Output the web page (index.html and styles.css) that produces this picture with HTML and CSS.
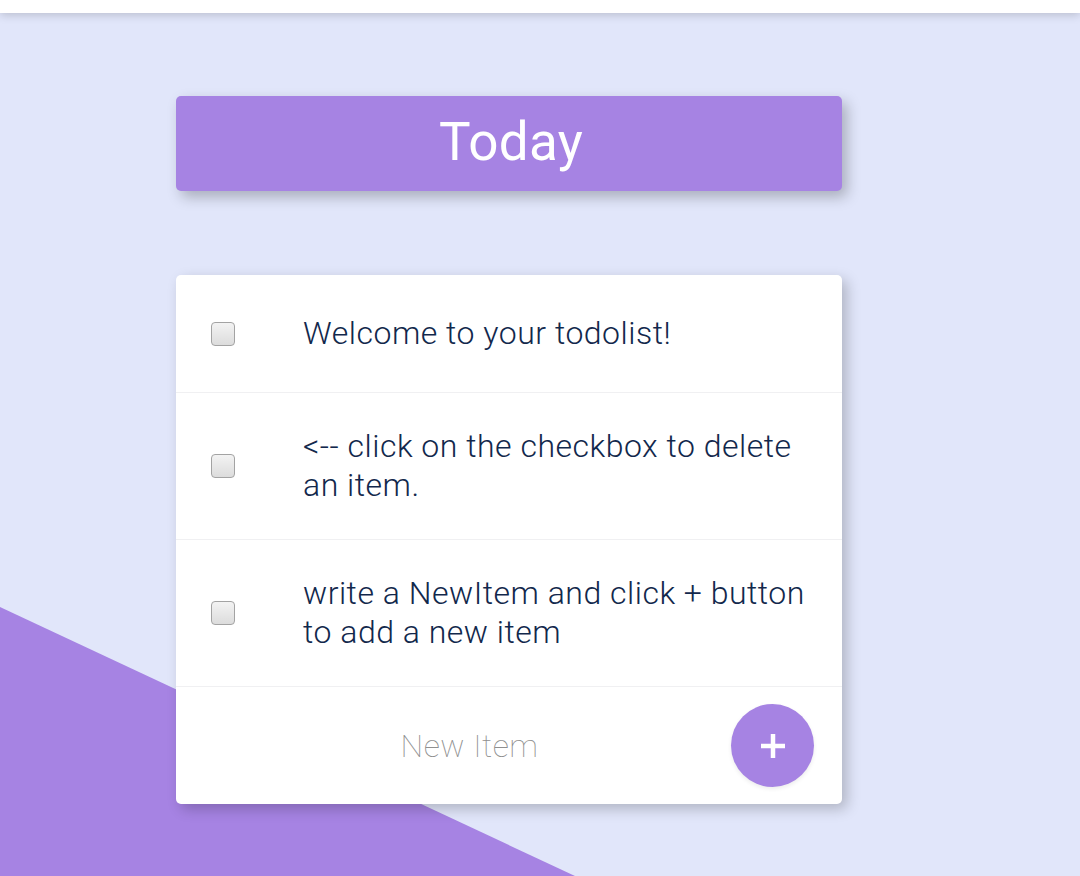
FILE: index.html
```html
<!DOCTYPE html>
<html lang="en">
<head>
<meta charset="utf-8">
<title>Todo List</title>
<link rel="stylesheet" href="styles.css">
</head>
<body>
<div class="topbar"></div>
<div class="bg-shape"></div>
<main class="page">
  <div class="heading"><h1>Today</h1></div>
  <div class="card">
    <div class="item">
      <input type="checkbox" class="check">
      <p>Welcome to your todolist!</p>
    </div>
    <div class="item">
      <input type="checkbox" class="check">
      <p>&lt;-- click on the checkbox to delete an item.</p>
    </div>
    <div class="item">
      <input type="checkbox" class="check">
      <p>write a NewItem and click + button to add a new item</p>
    </div>
    <form class="new-row">
      <input type="text" class="new-input" placeholder="New Item">
      <button type="button" class="add-btn" aria-label="Add">
        <svg width="28" height="28" viewBox="0 0 28 28"><rect x="11.75" y="2" width="4.5" height="24" fill="#fff"/><rect x="2" y="11.75" width="24" height="4.5" fill="#fff"/></svg>
      </button>
    </form>
  </div>
</main>
</body>
</html>
```

FILE: styles.css
```css
html, body {
  margin: 0;
  padding: 0;
}
body {
  background: #e1e6fa;
  font-family: Roboto, "Liberation Sans", sans-serif;
  min-height: 876px;
  overflow: hidden;
  position: relative;
}
.topbar {
  height: 13px;
  background: #ffffff;
  box-shadow: 0 2px 10px rgba(0, 0, 0, 0.18);
  position: relative;
  z-index: 2;
}
.bg-shape {
  position: absolute;
  left: 0;
  top: 0;
  width: 1080px;
  height: 876px;
  background: #a683e3;
  clip-path: polygon(0 607px, 575px 876px, 0 876px);
  z-index: 0;
}
.page {
  position: relative;
  z-index: 1;
  width: 666px;
  margin-left: 176px;
  padding-top: 83px;
}
.heading {
  background: #a683e3;
  height: 95px;
  border-radius: 5px;
  box-shadow: 5px 6px 14px rgba(0, 0, 0, 0.25);
  display: flex;
  align-items: center;
  justify-content: center;
}
.heading h1 {
  margin: 0;
  color: #ffffff;
  font-family: Roboto, "Liberation Sans", sans-serif;
  font-weight: 400;
  font-size: 53px;
  letter-spacing: 0.3px;
  line-height: 1;
  padding: 0 0 2px 4px;
}
.card {
  margin-top: 84px;
  background: #ffffff;
  border-radius: 5px;
  box-shadow: 5px 5px 14px rgba(0, 0, 0, 0.22);
}
.item {
  display: flex;
  align-items: center;
  box-sizing: border-box;
  min-height: 118px;
  padding: 34px 30px 34px 35px;
  border-bottom: 1px solid #f0f0f2;
}
.check {
  appearance: none;
  -webkit-appearance: none;
  margin: 0 68px 0 0;
  width: 24px;
  height: 24px;
  flex: none;
  border: 1.5px solid #a3a3a3;
  border-radius: 4px;
  background: linear-gradient(#f3f3f3, #dcdcdc);
  box-sizing: border-box;
}
.item p {
  margin: 0;
  font-size: 32px;
  letter-spacing: 0.5px;
  line-height: 39px;
  font-weight: 300;
  color: #12284c;
}
.new-row {
  display: flex;
  align-items: center;
  height: 117px;
  padding: 0 28px 0 34px;
  margin: 0;
}
.new-input {
  flex: 1;
  border: none;
  outline: none;
  background: transparent;
  text-align: center;
  font-family: Roboto, "Liberation Sans", sans-serif;
  font-size: 32px;
  letter-spacing: 0.5px;
  font-weight: 100;
  color: #333;
  padding: 0;
  margin-right: 2px;
}
.new-input::placeholder {
  color: #8f8f8f;
  font-weight: 100;
}
.add-btn {
  width: 83px;
  height: 83px;
  border-radius: 50%;
  border: none;
  background: #a683e3;
  display: flex;
  align-items: center;
  justify-content: center;
  padding: 0;
  box-shadow: 0 2px 4px rgba(0,0,0,0.08);
}
```
